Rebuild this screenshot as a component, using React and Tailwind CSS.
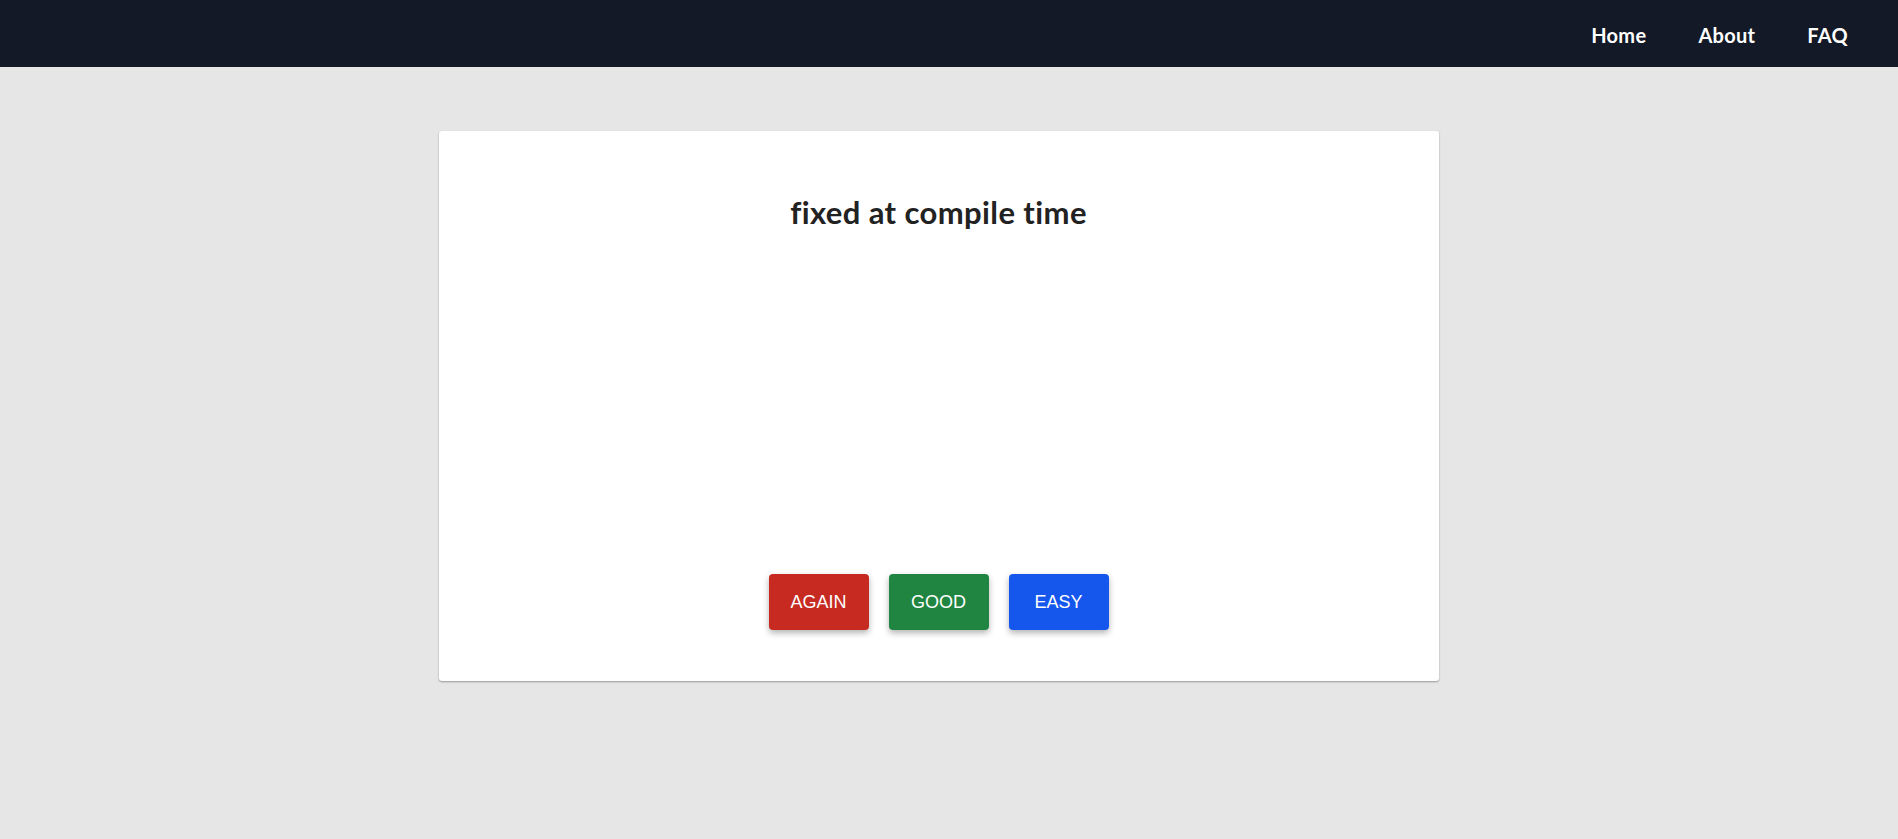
import React from "react";

const buttons = [
  { label: "AGAIN", cls: "bg-[#c62a21]" },
  { label: "GOOD", cls: "bg-[#208541]" },
  { label: "EASY", cls: "bg-[#1556ed]" },
];

const App = () => {
  return (
    <div className="min-h-screen bg-[#e6e6e6] font-['Lato',sans-serif]">
      {/* Top nav */}
      <nav className="h-[67px] bg-[#131926] flex items-center justify-end gap-[52px] pr-[50px] pt-[2px]">
        <a className="text-white text-[20px] font-bold tracking-[0.3px]">Home</a>
        <a className="text-white text-[20px] font-bold tracking-[0.3px]">About</a>
        <a className="text-white text-[20px] font-bold tracking-[0.3px]">FAQ</a>
      </nav>

      {/* Card */}
      <div className="flex justify-center pt-[64px] pr-[21px]">
        <div className="w-[1000px] h-[550px] bg-white rounded-[3px] shadow-[0_1px_2px_rgba(0,0,0,0.35)] flex flex-col items-center">
          <h2 className="mt-[58px] text-[31px] font-bold text-[#222] tracking-[0.4px]">
            fixed at compile time
          </h2>
          <div className="mt-auto mb-[51px] flex gap-5">
            {buttons.map((b) => (
              <button
                key={b.label}
                className={`${b.cls} w-[100px] h-[56px] rounded-[4px] text-white text-[18px] font-['Liberation_Sans',sans-serif] shadow-[0_3px_6px_rgba(0,0,0,0.3)]`}
              >
                {b.label}
              </button>
            ))}
          </div>
        </div>
      </div>
    </div>
  );
};

export default App;
